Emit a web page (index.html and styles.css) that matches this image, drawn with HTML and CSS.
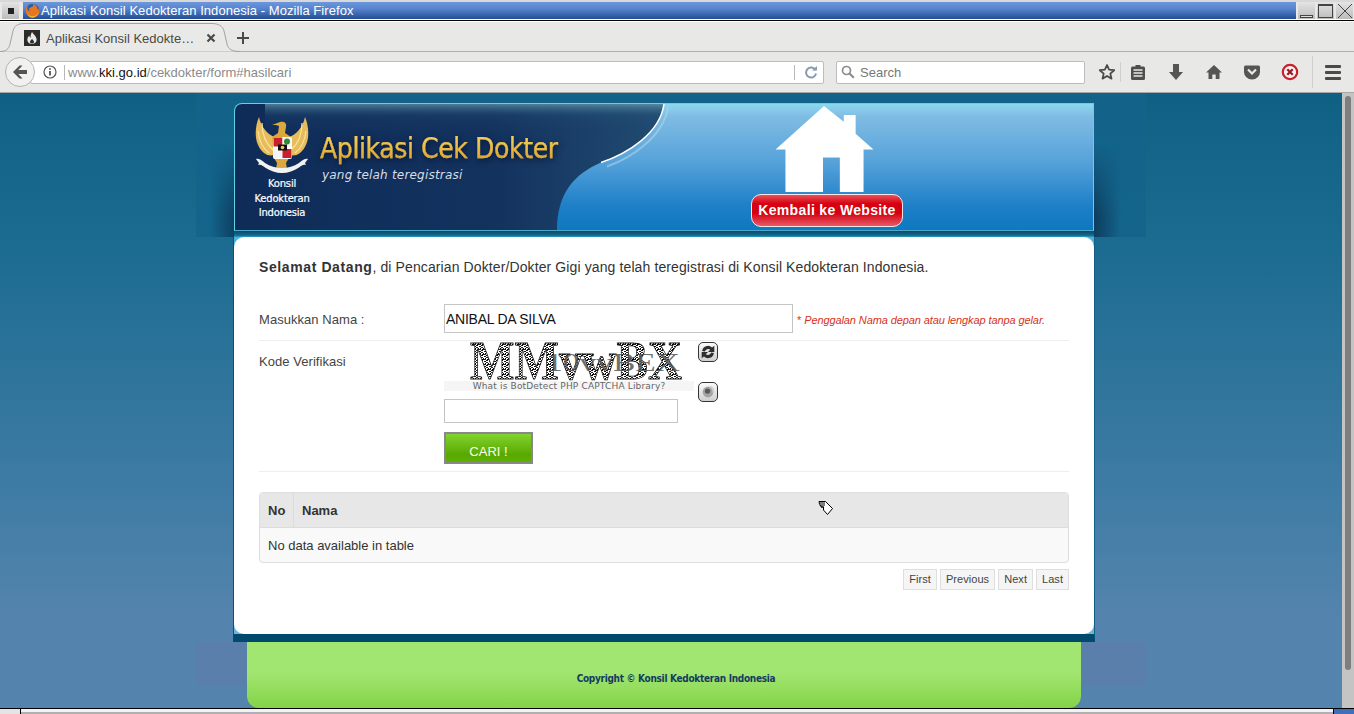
FILE: index.html
```html
<!DOCTYPE html>
<html lang="id">
<head>
<meta charset="utf-8">
<title>Aplikasi Konsil Kedokteran Indonesia - Mozilla Firefox</title>
<link rel="stylesheet" href="styles.css">
</head>
<body>
<div class="titlebar">
  <div class="wm-menu"><span class="wm-dot"></span></div>
  <div class="wm-title">
    <svg class="ff-icon" viewBox="0 0 16 16"><circle cx="8" cy="8" r="7.2" fill="#2d5fa8"/><circle cx="8.6" cy="7.6" r="3.6" fill="#4f86c8"/><path d="M3 1.5C1 4 .3 7 1 10c1 3.4 3.8 5.6 7.2 5.6 3.6 0 6.6-2.6 7.2-6.2.2-1.6 0-3-.8-4.4.2 1.4-.2 2.2-.8 2.8C13.4 4.6 11.5 2 8.5.8c.6 1.6.2 2.8-.8 3.4-1 .6-3 .6-3.4 2-.3 1.2.5 2.3 1.5 2.7-1.6 0-3-1-3.2-2.6C2.5 5 2.8 3 3 1.5z" fill="#e8761e"/><path d="M2 11c2 3 6 4 9.5 2.3 1.7-.8 3-2.3 3.6-3.9-.8 3.5-3.6 6.2-7 6.2-2.7 0-4.9-1.8-6.1-4.6z" fill="#f4b52c"/></svg>
    <span>Aplikasi Konsil Kedokteran Indonesia - Mozilla Firefox</span>
  </div>
  <div class="wm-btn"><span class="wm-min"></span></div>
  <div class="wm-btn"><span class="wm-max"></span></div>
  <div class="wm-btn">
    <svg class="wm-x" viewBox="0 0 16 16"><path d="M1 1l14 14M15 1L1 15" stroke="#444" stroke-width="1" fill="none"/></svg>
  </div>
</div>

<div class="tabbar">
  <svg class="tab-shape" viewBox="0 0 240 31"><path d="M0 29.5C6 29.5 9 27 10 22L13 9C14 4 18 1.5 24 1.5H212C218 1.5 223 4 224 9L227 22C228 27 232 29.5 240 29.5" fill="#e9e9e7" stroke="#a2a3a2" stroke-width="1"/></svg>
  <div class="tab">
    <svg class="favicon" viewBox="0 0 16 16"><rect width="16" height="16" fill="#2b2b2b"/><path d="M8 2c1 2 4 3.5 4.6 7 .4 2.5-1.6 5-4.6 5s-5-2.3-4.6-5c.2-1.6 1.2-2.6 2-3.4 0 1.2.5 2 1.2 2.2C6.4 5.6 7 3.6 8 2zm0 7c-1 1-2 1.8-2 3 0 1 .9 1.6 2 1.6s2-.6 2-1.6c0-1.2-1-2-2-3z" fill="#e9e9e9"/></svg>
    <span class="tab-title">Aplikasi Konsil Kedokte…</span>
    <svg class="tab-close" viewBox="0 0 10 10"><path d="M1.5 1.5l7 7M8.5 1.5l-7 7" stroke="#4a4a4a" stroke-width="2.2"/></svg>
  </div>
  <svg class="tab-plus" viewBox="0 0 14 14"><path d="M7 1v12M1 7h12" stroke="#4a4a4a" stroke-width="2"/></svg>
</div>

<div class="navbar">
  <div class="urlbar">
    <svg class="info" viewBox="0 0 14 14"><circle cx="7" cy="7" r="6" fill="none" stroke="#555" stroke-width="1.2"/><path d="M7 6v4.5M7 3.2v1.6" stroke="#555" stroke-width="1.8"/></svg>
    <span class="url-sep"></span>
    <span class="url"><span class="url-dim">www.</span><span class="url-host">kki.go.id</span><span class="url-dim">/cekdokter/form#hasilcari</span></span>
    <span class="url-sep url-sep-end"></span>
    <svg class="reload" viewBox="0 0 14 14"><path d="M11.5 5.2A5 5 0 1 0 12 8.5" fill="none" stroke="#8a9bb0" stroke-width="2"/><path d="M8 5.500h5v-4.500z" fill="#8a9bb0"/></svg>
  </div>
  <div class="back">
    <svg viewBox="0 0 18 18"><path d="M8.5 2.5L2 9l6.5 6.5h3L7.3 11H16V7H7.3l4.2-4.5z" fill="#555"/></svg>
  </div>
  <div class="searchbar">
    <svg class="search-ic" viewBox="0 0 14 14"><circle cx="5.5" cy="5.5" r="4" fill="none" stroke="#8c8c8c" stroke-width="1.7"/><path d="M8.5 8.5l4.3 4.3" stroke="#8c8c8c" stroke-width="2.2"/></svg>
    <span class="search-ph">Search</span>
  </div>
  <div class="tools">
    <svg class="tool tool-star" viewBox="0 0 18 18"><path d="M9 2l2.1 4.7 5.1.5-3.9 3.4 1.2 5L9 13l-4.500 2.6 1.2-5L1.8 7.2l5.1-.5z" fill="none" stroke="#4a4a4a" stroke-width="1.8" stroke-linejoin="round"/></svg>
    <span class="tool-sep"></span>
    <svg class="tool tool-clip" viewBox="0 0 16 18"><path d="M2.5 3.5h3V2h5v1.5h3a1.5 1.5 0 0 1 1.5 1.5v10.5a1.5 1.5 0 0 1-1.5 1.5h-11A1.5 1.5 0 0 1 1 15.5V5a1.5 1.5 0 0 1 1.5-1.5z" fill="#4f4f4f"/><path d="M3.5 7h9M3.5 10h9M3.5 13h9" stroke="#e9e9e7" stroke-width="1.3"/></svg>
    <svg class="tool tool-down" viewBox="0 0 16 18"><path d="M5 1h6v8h4l-7 8-7-8h4z" fill="#555"/></svg>
    <svg class="tool tool-home" viewBox="0 0 18 18"><path d="M9 2L1 9.5h2.500V16h3.800v-4.500h3.400V16h3.800V9.500H17z" fill="#555"/></svg>
    <svg class="tool tool-pocket" viewBox="0 0 18 18"><path d="M2.5 2.5h13A1.5 1.5 0 0 1 17 4v5a8 7.5 0 0 1-16 0V4a1.5 1.5 0 0 1 1.5-1.5z" fill="#555"/><path d="M5 6.5l4 4 4-4" fill="none" stroke="#e9e9e7" stroke-width="2.2"/></svg>
    <svg class="tool tool-block" viewBox="0 0 18 18"><circle cx="9" cy="9" r="7.2" fill="#f4f4f4" stroke="#c8202c" stroke-width="2.2"/><path d="M6.3 6.3l5.4 5.4M11.7 6.3l-5.4 5.4" stroke="#a01820" stroke-width="2.3"/></svg>
    <span class="tool-sep tool-sep-end"></span>
    <div class="burger"><span></span><span></span><span></span></div>
  </div>
</div>

<div class="viewport">
  <div class="page">
    <div class="stage">
      <header class="site-header">
        <svg class="header-art" viewBox="0 0 858 127" preserveAspectRatio="none">
          <defs>
            <linearGradient id="skyG" x1="0" y1="0" x2="0" y2="1"><stop offset="0" stop-color="#8bd9ee"/><stop offset=".1" stop-color="#7fbce3"/><stop offset=".45" stop-color="#57a3da"/><stop offset=".8" stop-color="#1f80c8"/><stop offset="1" stop-color="#0d78c0"/></linearGradient>
            <linearGradient id="navyG" x1="0" y1="0" x2="1" y2="0"><stop offset="0" stop-color="#0f2c59"/><stop offset=".6" stop-color="#13325e"/><stop offset="1" stop-color="#214c72"/></linearGradient>
            <linearGradient id="glowG" x1="0" y1="0" x2="0" y2="1"><stop offset="0" stop-color="#7fb8c4" stop-opacity=".55"/><stop offset=".35" stop-color="#2a5a80" stop-opacity=".2"/><stop offset="1" stop-color="#13325e" stop-opacity="0"/></linearGradient>
          </defs>
          <rect width="858" height="127" fill="url(#skyG)"/>
          <path d="M0 0H429C425 30 392 50 366 59C340 70 322 90 322 127H0Z" fill="url(#navyG)"/>
          <path d="M30 0H429C428 12 420 24 408 34H30Z" fill="url(#glowG)"/>
          <path d="M429 0C425 30 392 50 366 59" fill="none" stroke="#ffffff" stroke-width="1.5"/>
          <path d="M433 4C428 32 398 54 372 63" fill="none" stroke="#a9d3ec" stroke-width="2" opacity=".6"/>
        </svg>
        <div class="brand">
          <div class="brand-logo">
            <svg class="garuda" viewBox="0 0 54 58">
              <path d="M4 0C-1 12-1 28 9 36c3 2.5 7 3 10 2l1-18C13 18 6 10 4 0z" fill="#e6bc5c"/>
              <path d="M50 0c5 12 5 28-5 36-3 2.5-7 3-10 2l-1-18c7-2 14-10 16-20z" fill="#e6bc5c"/>
              <path d="M7 6c0 10 3 20 11 27M47 6c0 10-3 20-11 27M3 14c1 9 4 17 11 22M51 14c-1 9-4 17-11 22" fill="none" stroke="#fbe59c" stroke-width="1.2"/>
              <path d="M17 8l8-3c4-1 7 1 6 5l-1 6 6 4-2 21-3 5 1 6-5 4-6-4 1-6-3-5-2-21 6-4 1-7-3-1z" fill="#dca83e"/>
              <rect x="18" y="20" width="19" height="22" rx="2" fill="#fff"/>
              <rect x="18.5" y="20.5" width="9" height="9" fill="#c8202c"/>
              <rect x="27.5" y="20.5" width="9" height="9" fill="#f4f4f4"/>
              <circle cx="32" cy="24.5" r="3" fill="#2f8a3c"/>
              <rect x="18.5" y="32" width="9" height="9" fill="#f4f4f4"/>
              <rect x="27.5" y="32" width="9" height="9" fill="#c8202c"/>
              <rect x="23" y="27.5" width="9" height="6" fill="#111"/>
              <circle cx="27.5" cy="30.5" r="1.8" fill="#e8c860"/>
              <path d="M1 42c4-1 6 2 9 4 5 3.5 11 5 17 5s12-1.5 17-5c3-2 5-5 9-4l-3 4 1 2c-3-1-5 1-7 2.5-5 3.5-11 5.5-17 5.5S15 54 10 50.5C8 49 6 47 3 48l1-2z" fill="#f2f2f2"/>
            </svg>
            <p class="brand-org">Konsil<br>Kedokteran<br>Indonesia</p>
          </div>
          <div class="brand-text">
            <h1 class="brand-title">Aplikasi Cek Dokter</h1>
            <p class="brand-sub">yang telah teregistrasi</p>
          </div>
        </div>
        <div class="home">
          <svg class="house" viewBox="0 0 100 88"><path d="M49 0L69 16V9H81V28L99 44H89V87H65V52H48V87H10V44H0z" fill="#fff"/></svg>
          <a class="home-btn">Kembali ke Website</a>
        </div>
      </header>
      <div class="header-strip"></div>

      <main class="panel">
        <div class="panel-body">
          <p class="intro"><strong>Selamat Datang</strong>, di Pencarian Dokter/Dokter Gigi yang telah teregistrasi di Konsil Kedokteran Indonesia.</p>

          <div class="form-row form-row-name">
            <label class="form-label">Masukkan Nama :</label>
            <input class="name-input" type="text" value="ANIBAL DA SILVA">
            <span class="form-note">* <em>Penggalan Nama depan atau lengkap tanpa gelar.</em></span>
          </div>

          <div class="form-row form-row-captcha">
            <label class="form-label form-label-captcha">Kode Verifikasi</label>
            <div class="captcha-col">
              <div class="captcha-line">
                <div class="captcha">
                  <svg class="captcha-img" viewBox="0 0 250 40">
                    <defs>
                      <pattern id="noise" width="5" height="5" patternUnits="userSpaceOnUse"><rect width="5" height="5" fill="#fff"/><rect x="0" y="0" width="2" height="1" fill="#111"/><rect x="2" y="1" width="2" height="1" fill="#222"/><rect x="4" y="2" width="1" height="2" fill="#111"/><rect x="0" y="3" width="2" height="1" fill="#222"/><rect x="2" y="4" width="2" height="1" fill="#111"/><rect x="1" y="2" width="1" height="1" fill="#000"/><rect x="3" y="3" width="1" height="1" fill="#000"/></pattern>
                    </defs>
                    <text class="cap-main" x="26" y="38" textLength="212" lengthAdjust="spacingAndGlyphs">MMvwBX</text>
                    <text class="cap-ghost" x="102" y="30" textLength="134" lengthAdjust="spacingAndGlyphs">10vvBEX</text>
                  </svg>
                  <a class="captcha-link">What is BotDetect PHP CAPTCHA Library?</a>
                </div>
                <div class="captcha-tools">
                  <span class="cap-btn">
                    <svg viewBox="0 0 20 20"><path d="M3.5 9a6.5 6.5 0 0 1 11-4L17 3v7h-7l2.5-2.5A3.800 3.800 0 0 0 6.500 9.500zM16.500 11a6.500 6.500 0 0 1-11 4L3 17v-7h7l-2.500 2.500a3.800 3.800 0 0 0 6-2z" fill="#2e2e2e"/></svg>
                  </span>
                  <span class="cap-btn">
                    <svg viewBox="0 0 20 20"><circle cx="10" cy="10" r="6" fill="#a4a4a4"/><circle cx="9.5" cy="9" r="3" fill="#5a5a5a"/><path d="M12 4c3 1 4.5 4 4 7" fill="none" stroke="#d0d0d0" stroke-width="2"/></svg>
                  </span>
                </div>
              </div>
              <input class="code-input" type="text">
              <button class="search-btn" type="button">CARI !</button>
            </div>
          </div>

          <div class="table-wrap">
            <div class="t-head">
              <div class="t-no">No</div>
              <div class="t-name">Nama</div>
            </div>
            <div class="t-row">No data available in table</div>
          </div>

          <nav class="pager">
            <a class="pager-btn">First</a>
            <a class="pager-btn">Previous</a>
            <a class="pager-btn">Next</a>
            <a class="pager-btn">Last</a>
          </nav>
        </div>
      </main>

      <footer class="site-footer">
        <p class="copyright">Copyright © Konsil Kedokteran Indonesia</p>
      </footer>
    </div>
    <svg class="hand-cursor" viewBox="0 0 16 16"><path d="M1 1.5h6.5l7 7-5 6-4-4.500V7H3V5.500H2V4H1.500z" fill="#fff" stroke="#000" stroke-width="1"/><path d="M2 3h5M3 5h4M3 7h3" stroke="#000" stroke-width="1"/></svg>
  </div>
  <div class="scrollbar"><span class="scroll-thumb"></span></div>
</div>

<div class="bottom">
  <span class="bottom-left"></span>
  <span class="bottom-mid"></span>
  <span class="bottom-right"></span>
</div>
</body>
</html>
```

FILE: styles.css
```css
* { box-sizing: border-box; }
html, body { margin: 0; padding: 0; height: 100%; overflow: hidden; }
body {
  width: 1354px; height: 714px;
  display: flex; flex-direction: column;
  font-family: "Liberation Sans", Arial, sans-serif;
  background: #e8e8e7;
}
p, h1 { margin: 0; }

/* window-manager title bar */
.titlebar {
  flex: 0 0 22px; display: flex; gap: 2px;
  padding: 2px 1px 2px 2px;
  background: linear-gradient(#d8d8d8 0 2px, #e8e8e8 2px 19px, #fff 19px 20px, #000 20px 21px, #fff 21px);
  height: 22px;
}
.wm-menu, .wm-btn {
  height: 17px; background: linear-gradient(#e4e4e4, #bcbcbc);
  display: flex; align-items: center; justify-content: center;
}
.wm-menu { width: 17px; margin-right: 2px; }
.wm-dot { width: 6px; height: 6px; background: #222; }
.wm-title {
  flex: 1; height: 17px; display: flex; align-items: center; gap: 1px; padding-left: 2px;
  background: linear-gradient(#6b97de, #5884cf 40%, #2f5ba4 85%, #244c90);
  color: #fff; font-size: 13px; line-height: 17px; letter-spacing: .06px;
}
.ff-icon { width: 15px; height: 15px; }
.wm-btn { width: 17px; position: relative; }
.wm-min { width: 13px; height: 3px; border: 1px solid #444; background: #ddd; margin-top: 11px; }
.wm-max { width: 15px; height: 14px; border: 1px solid #444; border-top-width: 2px; }
.wm-x { width: 16px; height: 16px; }

/* tab strip */
.tabbar {
  flex: 0 0 30px; min-height: 0; position: relative; display: flex; align-items: flex-start;
  padding-left: 12px; background: #e8e8e7; border-bottom: 1px solid #b0b0b0;
}
.tab-shape { position: absolute; left: 0; top: 0; width: 240px; height: 31px; }
.tab {
  position: relative; width: 216px; height: 29px; flex: none;
  display: flex; align-items: center; padding: 3px 0 0 12px;
}
.favicon { width: 16px; height: 16px; flex: none; }
.tab-title { margin-left: 6px; width: 157px; font-size: 13px; color: #4a4a4a; white-space: nowrap; }
.tab-close { width: 10px; height: 10px; margin-left: 3px; }
.tab-plus { position: relative; width: 14px; height: 14px; margin: 9px 0 0 8px; }

/* navigation bar */
.navbar {
  flex: 0 0 41px; position: relative; display: flex; align-items: center;
  padding: 0 0 0 30px; background: #e8e8e7; border-bottom: 1px solid #a8a8a8;
}
.back {
  position: absolute; left: 5px; top: 5px; width: 30px; height: 30px; border-radius: 50%;
  background: #f1f1f0; border: 1px solid #b4b4b4;
  display: flex; align-items: center; justify-content: center;
}
.back svg { width: 18px; height: 18px; }
.urlbar {
  width: 794px; height: 23px; background: #fff; border: 1px solid #bcbcbc; border-radius: 2px;
  display: flex; align-items: center; padding-left: 12px;
}
.info { width: 14px; height: 14px; flex: none; }
.url-sep { width: 1px; height: 15px; background: #b8b8b8; margin-left: 7px; flex: none; }
.url { flex: 1; margin-left: 3px; font-size: 13px; white-space: nowrap; }
.url-dim { color: #8a8a8a; }
.url-host { color: #111; }
.url-sep-end { margin: 0; }
.reload { width: 14px; height: 14px; margin: 0 5px 0 9px; flex: none; }
.searchbar {
  width: 249px; height: 23px; margin-left: 12px; background: #fff;
  border: 1px solid #bcbcbc; border-radius: 2px;
  display: flex; align-items: center; padding-left: 4px;
}
.search-ic { width: 14px; height: 14px; }
.search-ph { margin-left: 5px; font-size: 13px; color: #777; }
.tools { flex: 1; display: flex; align-items: center; padding-left: 13px; }
.tool { flex: none; height: 18px; }
.tool-star { width: 18px; }
.tool-sep { width: 1px; height: 20px; background: #cfcfce; margin-left: 4px; flex: none; }
.tool-clip { width: 16px; margin-left: 9px; }
.tool-down { width: 16px; margin-left: 22px; }
.tool-home { width: 18px; margin-left: 21px; }
.tool-pocket { width: 18px; margin-left: 20px; }
.tool-block { width: 18px; margin-left: 20px; }
.tool-sep-end { height: 32px; margin-left: 13px; }
.burger { display: flex; flex-direction: column; gap: 3px; margin-left: 12px; }
.burger span { display: block; width: 16px; height: 3px; background: #4a4a4a; border-radius: 1px; }

/* page viewport */
.viewport { flex: 1; display: flex; min-height: 0; }
.page {
  position: relative; flex: 1; min-width: 0; overflow: hidden;
  background: linear-gradient(#0f6184 0, #1c6b90 25%, #3f7ca5 65%, #5484ad 85%);
}
.stage {
  position: relative; isolation: isolate;
  width: 950px; height: 100%; margin: 0 auto; padding: 10px 52px 0 38px;
  background:
    linear-gradient(#12628a, #14658c) 0 0 / 100% 144px no-repeat,
    linear-gradient(#5a7fab, #5a7fab) 0 549px / 100% 43px no-repeat;
}
.stage::before {
  content: ""; position: absolute; left: 0; top: 0; width: 100%; height: 144px; z-index: -1;
  background: linear-gradient(90deg, transparent 14px, rgba(10,40,70,.6) 38px, transparent 38px, transparent 898px, rgba(10,40,70,.65) 898px, transparent 925px);
  -webkit-mask-image: linear-gradient(transparent 35%, #000 85%);
  mask-image: linear-gradient(transparent 35%, #000 85%);
}
.site-header {
  position: relative; height: 128px; display: flex;
  border: 1px solid #5fd2ea; border-bottom-color: #4ea9c9; border-radius: 8px 0 0 0;
  overflow: hidden;
}
.header-art { position: absolute; left: 0; top: 0; width: 100%; height: 100%; }
.brand { position: relative; flex: 0 0 516px; display: flex; padding: 13px 0 0 14px; }
.brand-logo { width: 66px; display: flex; flex-direction: column; align-items: center; }
.garuda { width: 54px; height: 58px; }
.brand-org {
  margin-top: 2px; text-align: center; font-family: "DejaVu Sans", sans-serif;
  font-size: 10px; line-height: 14.5px; color: #fff; letter-spacing: -.2px; white-space: nowrap;
  -webkit-text-stroke: .2px #fff;
}
.brand-text { margin-left: 5px; padding-top: 16px; }
.brand-title {
  font-family: "DejaVu Sans Condensed", "DejaVu Sans", sans-serif; font-stretch: condensed; font-weight: 400; font-size: 28px; line-height: 32px;
  letter-spacing: -.42px; white-space: nowrap;
  background: linear-gradient(#f6d86a, #d99a22); -webkit-background-clip: text; background-clip: text; color: transparent;
  -webkit-text-stroke: .25px #e8b840;
  filter: drop-shadow(1px 2px 3px rgba(0,10,40,.8));
}
.brand-sub {
  margin-top: 1px; margin-left: 2px; font-family: "DejaVu Sans", sans-serif; font-style: italic;
  font-size: 12px; line-height: 18px; color: #d8dde6; letter-spacing: .2px; white-space: nowrap;
}
.home { position: relative; flex: none; width: 152px; display: flex; flex-direction: column; align-items: center; padding-top: 2px; }
.house { width: 100px; height: 87px; flex: none; margin-right: 4px; }
.home-btn {
  margin-top: 1px; width: 152px; height: 33px; flex: none; border: 1.5px solid #fbe4e6; border-radius: 10px;
  background: linear-gradient(#e85258, #d80012 28%, #d40010 58%, #e65a66);
  color: #fff; font-weight: 700; font-size: 14px; line-height: 30px; text-align: center;
  letter-spacing: .35px; white-space: nowrap;
}
.header-strip { height: 6px; background: linear-gradient(#0b4a6a, #12688c 70%, #2ca0c4); }

.panel { background: linear-gradient(#4cb4d8, #6bb8dc); border-bottom: 8px solid #014a6e; border-right: 1px solid #0f5f88; border-left: 1px solid #0f4f74; margin: 0 -1px; }
.panel-body { background: #fff; border-radius: 10px; height: 397px; padding: 21px 25px 0 25px; color: #333; font-size: 13px; }
.intro { font-size: 14px; line-height: 18px; letter-spacing: .11px; white-space: nowrap; }
.intro strong { letter-spacing: .6px; }

.form-row { display: flex; border-bottom: 1px solid #eee; }
.form-row-name { margin-top: 22px; height: 43px; align-items: flex-start; padding-top: 6px; }
.form-label { flex: 0 0 185px; font-size: 13px; line-height: 18px; color: #444; letter-spacing: .05px; }
.form-row-name .form-label { padding-top: 7px; }
.form-label-captcha { padding-top: 12px; }
.name-input {
  width: 349px; height: 29px; border: 1px solid #c4c4c4; padding: 0 1px; margin: 0;
  font: 14px "Liberation Sans", sans-serif; letter-spacing: -.25px; color: #111; outline: none;
}
.form-note { margin: 10px 0 0 4px; font-size: 11px; line-height: 13px; letter-spacing: -.1px; color: #d8321a; white-space: nowrap; }
.form-row-captcha { height: 131px; }
.captcha-col { display: flex; flex-direction: column; align-items: flex-start; }
.captcha-line { display: flex; height: 61px; }
.captcha { width: 250px; height: 50px; display: flex; flex-direction: column; }
.captcha-img { width: 250px; height: 40px; display: block; overflow: visible; }
.cap-main { font-family: "Liberation Serif", serif; font-weight: 700; font-size: 55px; fill: url(#noise); stroke: #111; stroke-width: .8px; }
.cap-ghost { font-family: "Liberation Serif", serif; font-size: 26px; fill: #555; fill-opacity: .85; }
.captcha-link {
  display: block; height: 10px; background: #f5f5f5; text-align: center;
  font-family: "DejaVu Sans", sans-serif; font-size: 9px; line-height: 10px; color: #666; letter-spacing: .17px; white-space: nowrap;
}
.captcha-tools { display: flex; flex-direction: column; gap: 20px; margin-left: 4px; padding-top: 1px; }
.cap-btn {
  width: 20px; height: 20px; border: 1px solid #333; border-radius: 5px; background: linear-gradient(#fafafa, #cfcfcf);
  display: block;
}
.cap-btn svg { display: block; width: 18px; height: 18px; }
.code-input { width: 234px; height: 24px; border: 1px solid #c4c4c4; padding: 0; margin: -3px 0 0; outline: none; }
.search-btn {
  width: 89px; height: 32px; margin-top: 9px; padding: 7px 0 0; border: 2px solid #888; border-radius: 0;
  background: linear-gradient(#83d32e, #58a800 75%, #5fb000);
  color: #f6fff0; font: 13px "Liberation Sans", sans-serif;
}

.table-wrap { margin-top: 20px; height: 71px; border: 1px solid #dedede; border-radius: 4px; overflow: hidden; background: #f9f9f9; }
.t-head { display: flex; height: 35px; background: #e7e7e7; border-bottom: 1px solid #dcdcdc; font-weight: 700; font-size: 13px; line-height: 35px; color: #333; }
.t-no { width: 34px; padding-left: 8px; border-right: 1px solid #dcdcdc; }
.t-name { padding-left: 8px; }
.t-row { padding-left: 8px; font-size: 13px; line-height: 35px; color: #333; }

.pager { display: flex; justify-content: flex-end; gap: 3px; margin-top: 6px; }
.pager-btn { height: 21px; padding: 0 5px; background: #f5f5f5; border: 1px solid #dedede; font-size: 11px; line-height: 19px; letter-spacing: .05px; color: #444; }

.site-footer {
  height: 66px; margin: 0 13px; border-radius: 0 0 12px 12px;
  background: linear-gradient(#a2e672, #a2e672 45%, #84d348);
  display: flex; justify-content: center; padding: 30px 0 0 24px;
}
.copyright { font-family: "DejaVu Sans Condensed", "DejaVu Sans", sans-serif; font-stretch: condensed; font-weight: 700; font-size: 10px; line-height: 14px; letter-spacing: -.3px; color: #153c60; white-space: nowrap; }

.hand-cursor { position: absolute; left: 818px; top: 407px; width: 16px; height: 16px; }

.scrollbar { flex: 0 0 12px; background: #c4c4c4; padding: 3px 3px 0; }
.scroll-thumb { display: block; height: 574px; background: #7e7e7e; border-radius: 3px; }

.bottom { flex: 0 0 6px; display: flex; background: #000; padding-top: 1px; }
.bottom-left { width: 20px; background: #e4e4e4; }
.bottom-mid { flex: 1; background: linear-gradient(#f2f2f2 0 3px, #b0b0b0 3px); border-left: 1px solid #000; }
.bottom-right { width: 21px; background: #3f6fb8; border-left: 1px solid #000; }
```
